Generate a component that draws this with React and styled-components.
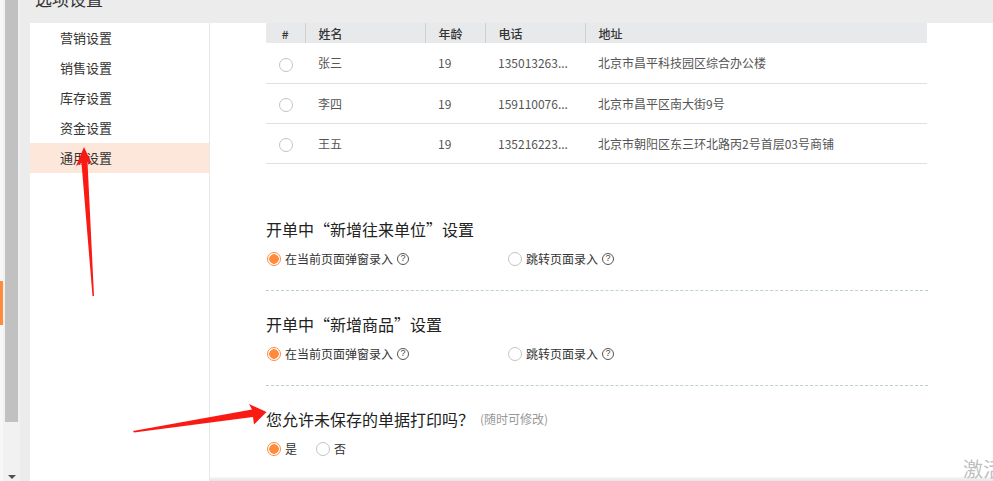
import React from "react";
import styled, { createGlobalStyle } from "styled-components";

const GlobalStyle = createGlobalStyle`
  html, body {
    margin: 0;
    padding: 0;
    overflow: hidden;
    background: #fff;
  }
  * { box-sizing: border-box; }
`;

const menuItems = ["营销设置", "销售设置", "库存设置", "资金设置", "通用设置"];

const rows = [
  { name: "张三", age: 19, phone: "13501326388", addr: "北京市昌平科技园区综合办公楼" },
  { name: "李四", age: 19, phone: "15911007654", addr: "北京市昌平区南大街9号" },
  { name: "王五", age: 19, phone: "13521622310", addr: "北京市朝阳区东三环北路丙2号首层03号商铺" },
];

const shorten = (s, n) => (s.length > n ? s.slice(0, n) + "..." : s);

const App = () => {
  return (
    <>
      <GlobalStyle />
      <Page>
        <Gutter>
          <SideTab />
        </Gutter>
        <ScrollTrack>
          <ScrollThumb />
          <ScrollArrow />
        </ScrollTrack>
        <Window>
          <TopBar>
            <Title>选项设置</Title>
          </TopBar>
          <WindowBody>
            <Menu>
              {menuItems.map((m, i) => (
                <MenuItem key={m} $active={i === menuItems.length - 1}>
                  {m}
                </MenuItem>
              ))}
            </Menu>
            <Content>
              <Scroll>
                <Table>
                  <thead>
                    <tr>
                      <Th $w={39} $center>#</Th>
                      <Th $w={120}>姓名</Th>
                      <Th $w={60}>年龄</Th>
                      <Th $w={100}>电话</Th>
                      <Th>地址</Th>
                    </tr>
                  </thead>
                  <tbody>
                    {rows.map((r) => (
                      <tr key={r.name}>
                        <Td $center>
                          <Radio />
                        </Td>
                        <Td>{r.name}</Td>
                        <Td>{r.age}</Td>
                        <Td>{shorten(r.phone, 9)}</Td>
                        <Td>{r.addr}</Td>
                      </tr>
                    ))}
                  </tbody>
                </Table>

                <Section $first>
                  <SectionTitle>开单中“新增往来单位”设置</SectionTitle>
                  <OptionRow>
                    <Option $w={241}>
                      <Radio $checked />
                      在当前页面弹窗录入
                      <Help>?</Help>
                    </Option>
                    <Option>
                      <Radio />
                      跳转页面录入
                      <Help>?</Help>
                    </Option>
                  </OptionRow>
                </Section>
                <Divider />
                <Section>
                  <SectionTitle>开单中“新增商品”设置</SectionTitle>
                  <OptionRow>
                    <Option $w={241}>
                      <Radio $checked />
                      在当前页面弹窗录入
                      <Help>?</Help>
                    </Option>
                    <Option>
                      <Radio />
                      跳转页面录入
                      <Help>?</Help>
                    </Option>
                  </OptionRow>
                </Section>
                <Divider />
                <Section>
                  <SectionTitle>
                    您允许未保存的单据打印吗？<Hint>(随时可修改)</Hint>
                  </SectionTitle>
                  <OptionRow>
                    <Option $w={49}>
                      <Radio $checked />是
                    </Option>
                    <Option>
                      <Radio />否
                    </Option>
                  </OptionRow>
                </Section>
              </Scroll>
              <BottomShadow />
            </Content>
          </WindowBody>
        </Window>
        <Watermark>激活 Windows</Watermark>
        <Arrows width="993" height="481" viewBox="0 0 993 481">
          <polygon points="84,147 76,166 81.5,163 92.5,296 94,296 87.5,162 92,164" />
          <polygon points="133,431 252,409.5 249,404 266.5,412 254,424.5 253,417 134,432.5" />
        </Arrows>
      </Page>
    </>
  );
};

const Page = styled.div`
  position: relative;
  display: flex;
  width: 993px;
  height: 481px;
  overflow: hidden;
  font-family: "Noto Sans CJK SC", "Noto Sans", sans-serif;
  color: #333;
`;

const Gutter = styled.div`
  width: 3px;
  flex-shrink: 0;
  background: #f7f7f7;
  padding-top: 281px;
`;

const SideTab = styled.div`
  height: 44px;
  background: #ff8c3a;
`;

const ScrollTrack = styled.div`
  width: 17px;
  flex-shrink: 0;
  background: #f1f1f1;
  display: flex;
  flex-direction: column;
  align-items: flex-start;
  padding-left: 2px;
`;

const ScrollThumb = styled.div`
  width: 13px;
  height: 422px;
  background: #c1c1c1;
`;

const ScrollArrow = styled.div`
  margin-top: auto;
  margin-left: 3px;
  margin-bottom: 2px;
  width: 0;
  height: 0;
  border-left: 4px solid transparent;
  border-right: 4px solid transparent;
  border-top: 4px solid #505050;
`;

const Window = styled.div`
  flex: 1;
  display: flex;
  flex-direction: column;
  background: #ececec;
  min-width: 0;
`;

const TopBar = styled.div`
  height: 23px;
  flex-shrink: 0;
  padding-left: 15px;
  overflow: hidden;
`;

const Title = styled.div`
  font-size: 17px;
  line-height: 20px;
  margin-top: -11px;
  color: #333;
`;

const WindowBody = styled.div`
  flex: 1;
  display: flex;
  padding-left: 10px;
  min-height: 0;
`;

const Menu = styled.div`
  width: 180px;
  flex-shrink: 0;
  background: #fff;
  border-right: 1px solid #e8e8e8;
`;

const MenuItem = styled.div`
  height: 30px;
  line-height: 30px;
  padding-left: 30px;
  font-size: 13px;
  color: #333;
  background: ${(p) => (p.$active ? "#fde6da" : "transparent")};
`;

const Content = styled.div`
  flex: 1;
  display: flex;
  flex-direction: column;
  background: #fff;
  min-width: 0;
`;

const Scroll = styled.div`
  flex: 1;
  overflow: hidden;
  padding-left: 56px;
`;

const BottomShadow = styled.div`
  height: 4px;
  flex-shrink: 0;
  background: linear-gradient(#f8f8f8, #e4e4e4);
`;

const Table = styled.table`
  width: 661px;
  border-collapse: collapse;
  table-layout: fixed;
  font-size: 12px;
`;

const Th = styled.th`
  width: ${(p) => (p.$w ? `${p.$w}px` : "auto")};
  height: 20px;
  padding: 0 0 0 ${(p) => (p.$center ? "0" : "13px")};
  text-align: ${(p) => (p.$center ? "center" : "left")};
  background: #e8e9eb;
  font-weight: 500;
  color: #333;
  border-right: 1px solid #d0d0d0;
  &:last-child {
    border-right: none;
  }
`;

const Td = styled.td`
  height: 40px;
  padding: 0 0 0 ${(p) => (p.$center ? "0" : "13px")};
  text-align: ${(p) => (p.$center ? "center" : "left")};
  color: #555;
  border-bottom: 1px solid #e0e0e0;
  white-space: nowrap;
  overflow: hidden;
  vertical-align: middle;
`;

const Radio = styled.span`
  display: inline-block;
  flex-shrink: 0;
  width: 14px;
  height: 14px;
  border-radius: 50%;
  border: 1px solid ${(p) => (p.$checked ? "#ff8b3d" : "#c4c4c4")};
  background: ${(p) =>
    p.$checked ? "radial-gradient(circle, #ff8b3d 0 4.5px, #fff 5px)" : "#fff"};
  vertical-align: middle;
`;

const Section = styled.div`
  padding: ${(p) => (p.$first ? "54px" : "22px")} 0 21px 0;
`;

const SectionTitle = styled.div`
  font-size: 16px;
  line-height: 22px;
  color: #222;
  display: flex;
  align-items: center;
`;

const Hint = styled.span`
  font-size: 12px;
  color: #999;
  margin-left: 6px;
`;

const OptionRow = styled.div`
  display: flex;
  align-items: center;
  margin-top: 9px;
  height: 20px;
`;

const Option = styled.label`
  display: flex;
  align-items: center;
  gap: 4px;
  width: ${(p) => (p.$w ? `${p.$w}px` : "auto")};
  font-size: 12px;
  color: #333;
  padding-left: 1px;
`;

const Help = styled.span`
  display: inline-flex;
  align-items: center;
  justify-content: center;
  width: 12px;
  height: 12px;
  margin-left: 0;
  border-radius: 50%;
  border: 1px solid #555;
  font-size: 9px;
  line-height: 1;
  color: #444;
  font-family: "Liberation Sans", sans-serif;
`;

const Divider = styled.div`
  width: 662px;
  border-top: 1px dashed #bcd0d0;
`;

const Watermark = styled.div`
  position: absolute;
  left: 963px;
  top: 454px;
  font-size: 20px;
  white-space: nowrap;
  color: rgba(170, 170, 170, 0.75);
  pointer-events: none;
`;

const Arrows = styled.svg`
  position: absolute;
  left: 0;
  top: 0;
  pointer-events: none;
  fill: #fa1a14;
`;

export default App;
